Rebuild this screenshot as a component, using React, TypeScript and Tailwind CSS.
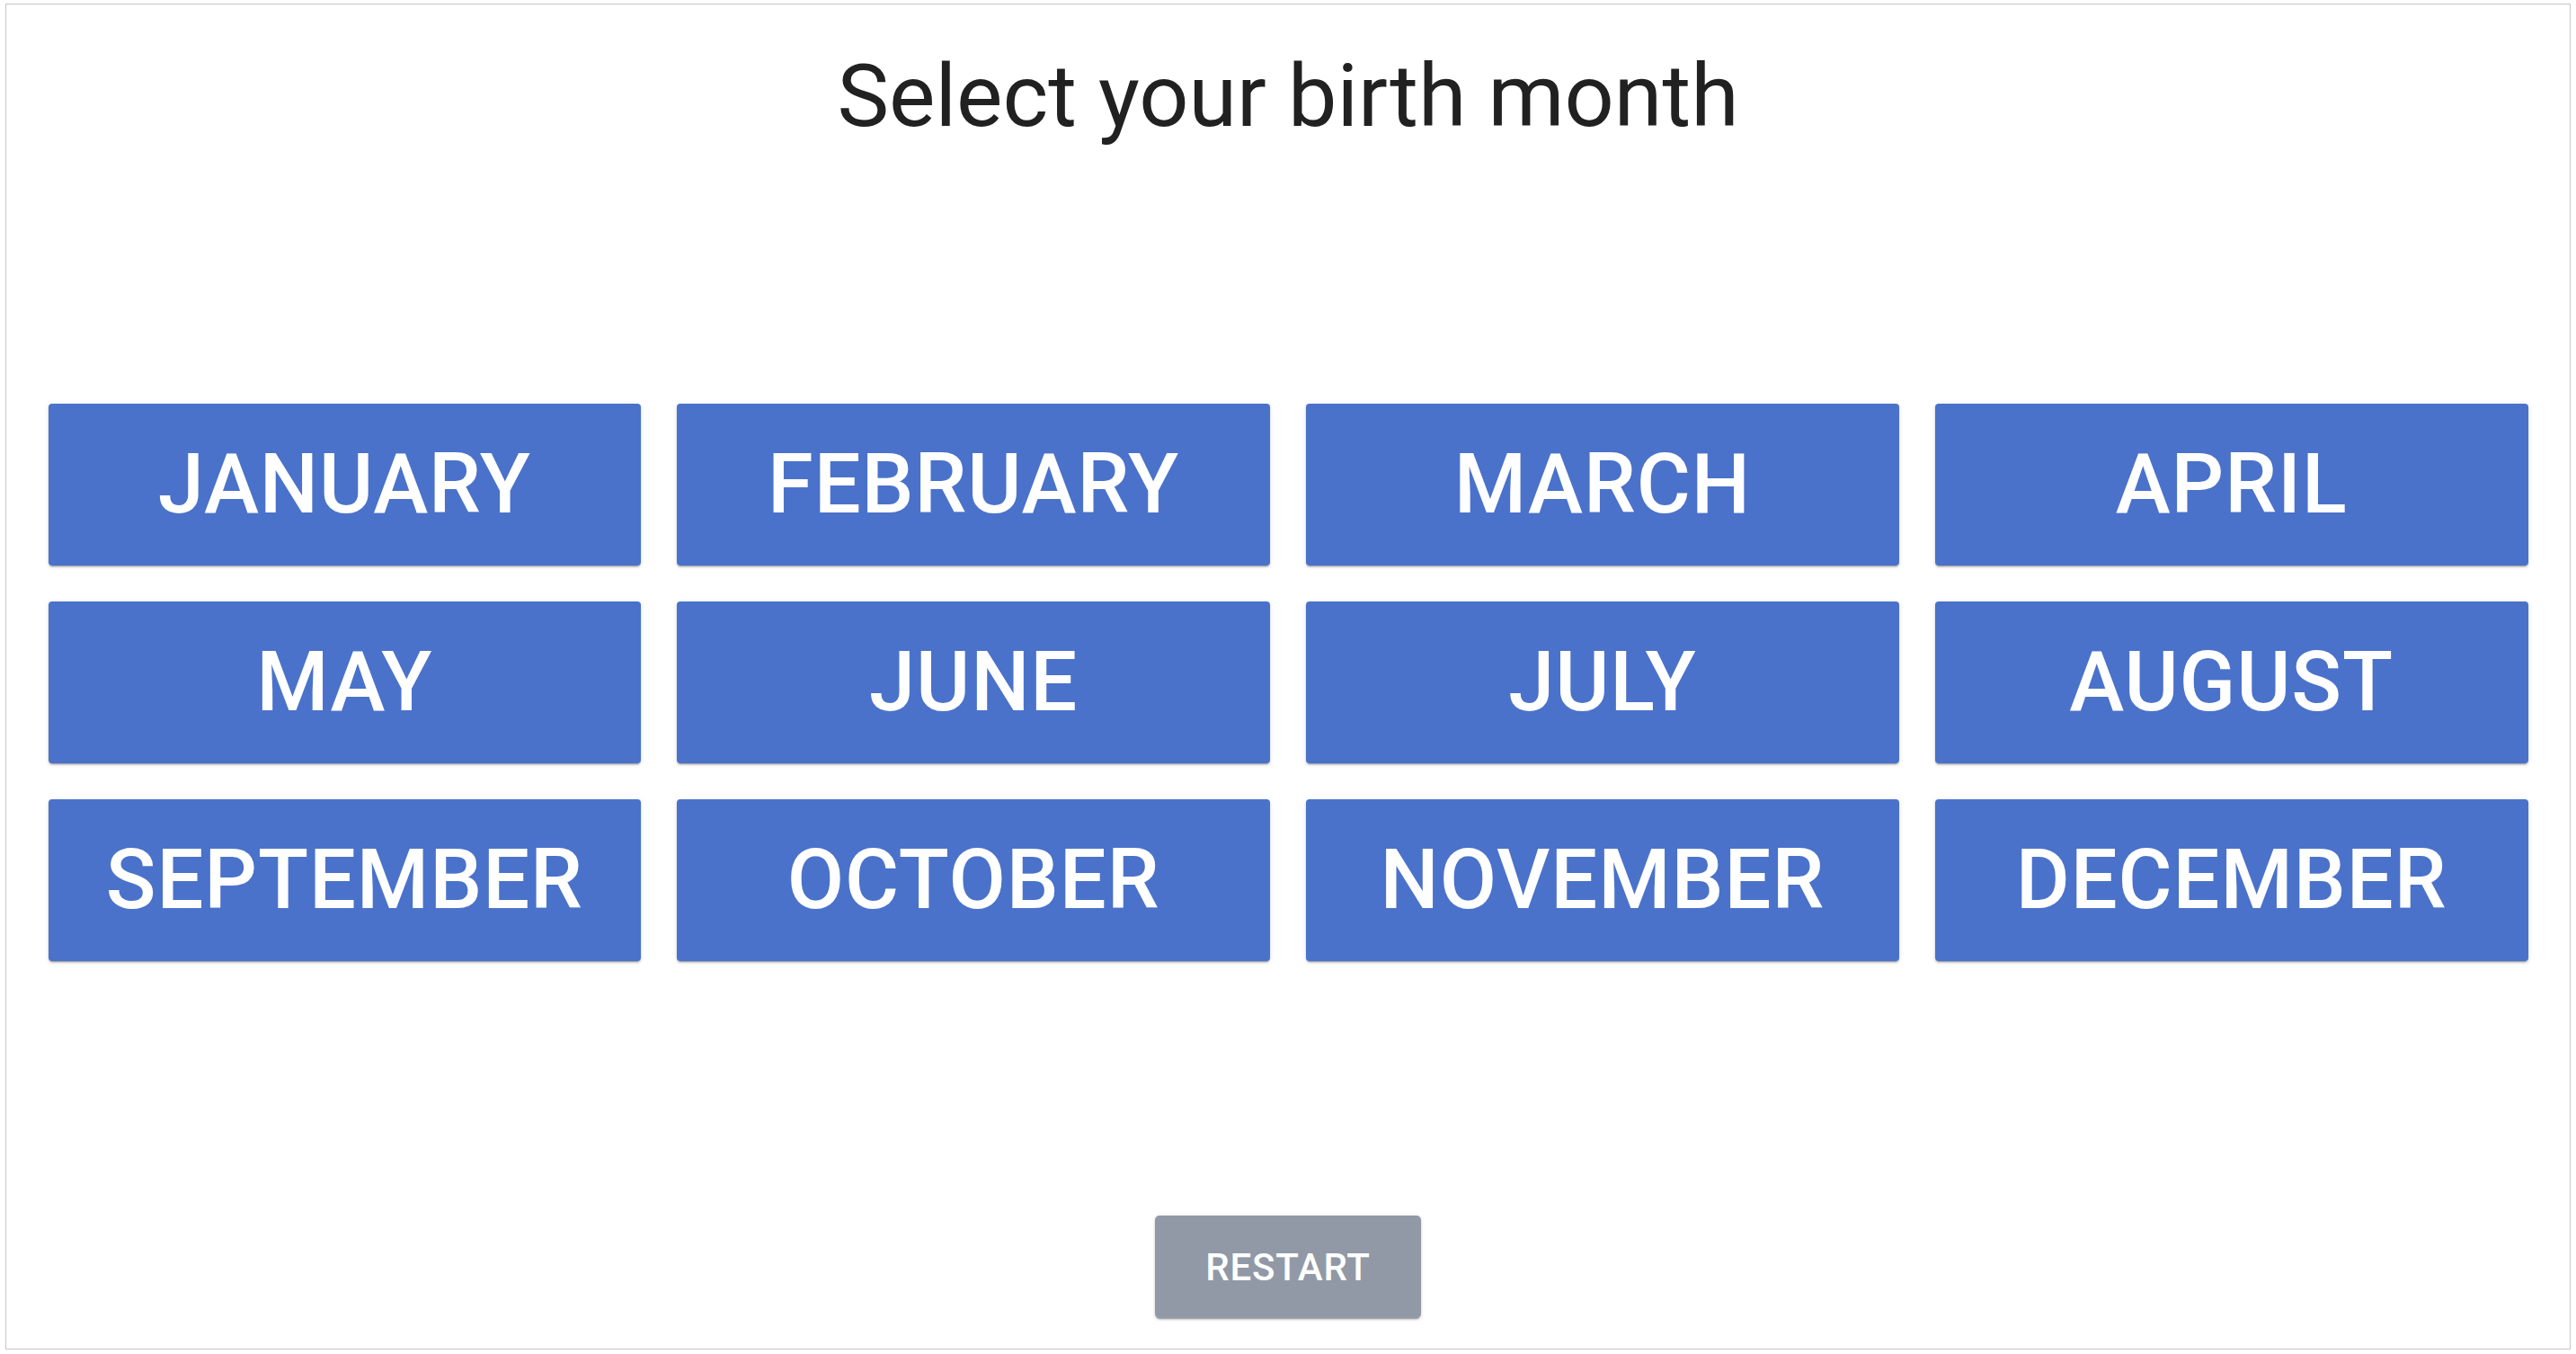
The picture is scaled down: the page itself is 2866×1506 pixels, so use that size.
import React from "react";

const months = [
  "JANUARY",
  "FEBRUARY",
  "MARCH",
  "APRIL",
  "MAY",
  "JUNE",
  "JULY",
  "AUGUST",
  "SEPTEMBER",
  "OCTOBER",
  "NOVEMBER",
  "DECEMBER",
];

export default function App() {
  return (
    <div
      className="w-[2866px] h-[1506px] bg-white pt-[4px] px-[6px]"
      style={{ fontFamily: "Roboto, 'Noto Sans', sans-serif" }}
    >
      <div className="h-[1497px] border border-[#c6c6c6] flex flex-col items-center">
        <h1 className="mt-[46px] text-[97px] leading-[112px] font-normal text-[#212121]">
          Select your birth month
        </h1>
        <div className="mt-[286px] w-[2759px] grid grid-cols-4 gap-x-[40px] gap-y-[40px]">
          {months.map((m) => (
            <button
              key={m}
              className="h-[180px] rounded-[4px] bg-[#4a72ca] text-white text-[92px] font-medium tracking-[0.01em] flex items-center justify-center shadow-[0_3px_1px_-2px_rgba(0,0,0,0.2),0_2px_2px_0_rgba(0,0,0,0.14),0_1px_5px_0_rgba(0,0,0,0.12)]"
            >
              {m}
            </button>
          ))}
        </div>
        <button className="mt-auto mb-[34px] w-[296px] h-[114px] rounded-[5px] bg-[#9199a6] text-white text-[42px] font-medium tracking-[0.02em] flex items-center justify-center shadow-[0_3px_1px_-2px_rgba(0,0,0,0.2),0_2px_2px_0_rgba(0,0,0,0.14),0_1px_5px_0_rgba(0,0,0,0.12)]">
          RESTART
        </button>
      </div>
    </div>
  );
}
